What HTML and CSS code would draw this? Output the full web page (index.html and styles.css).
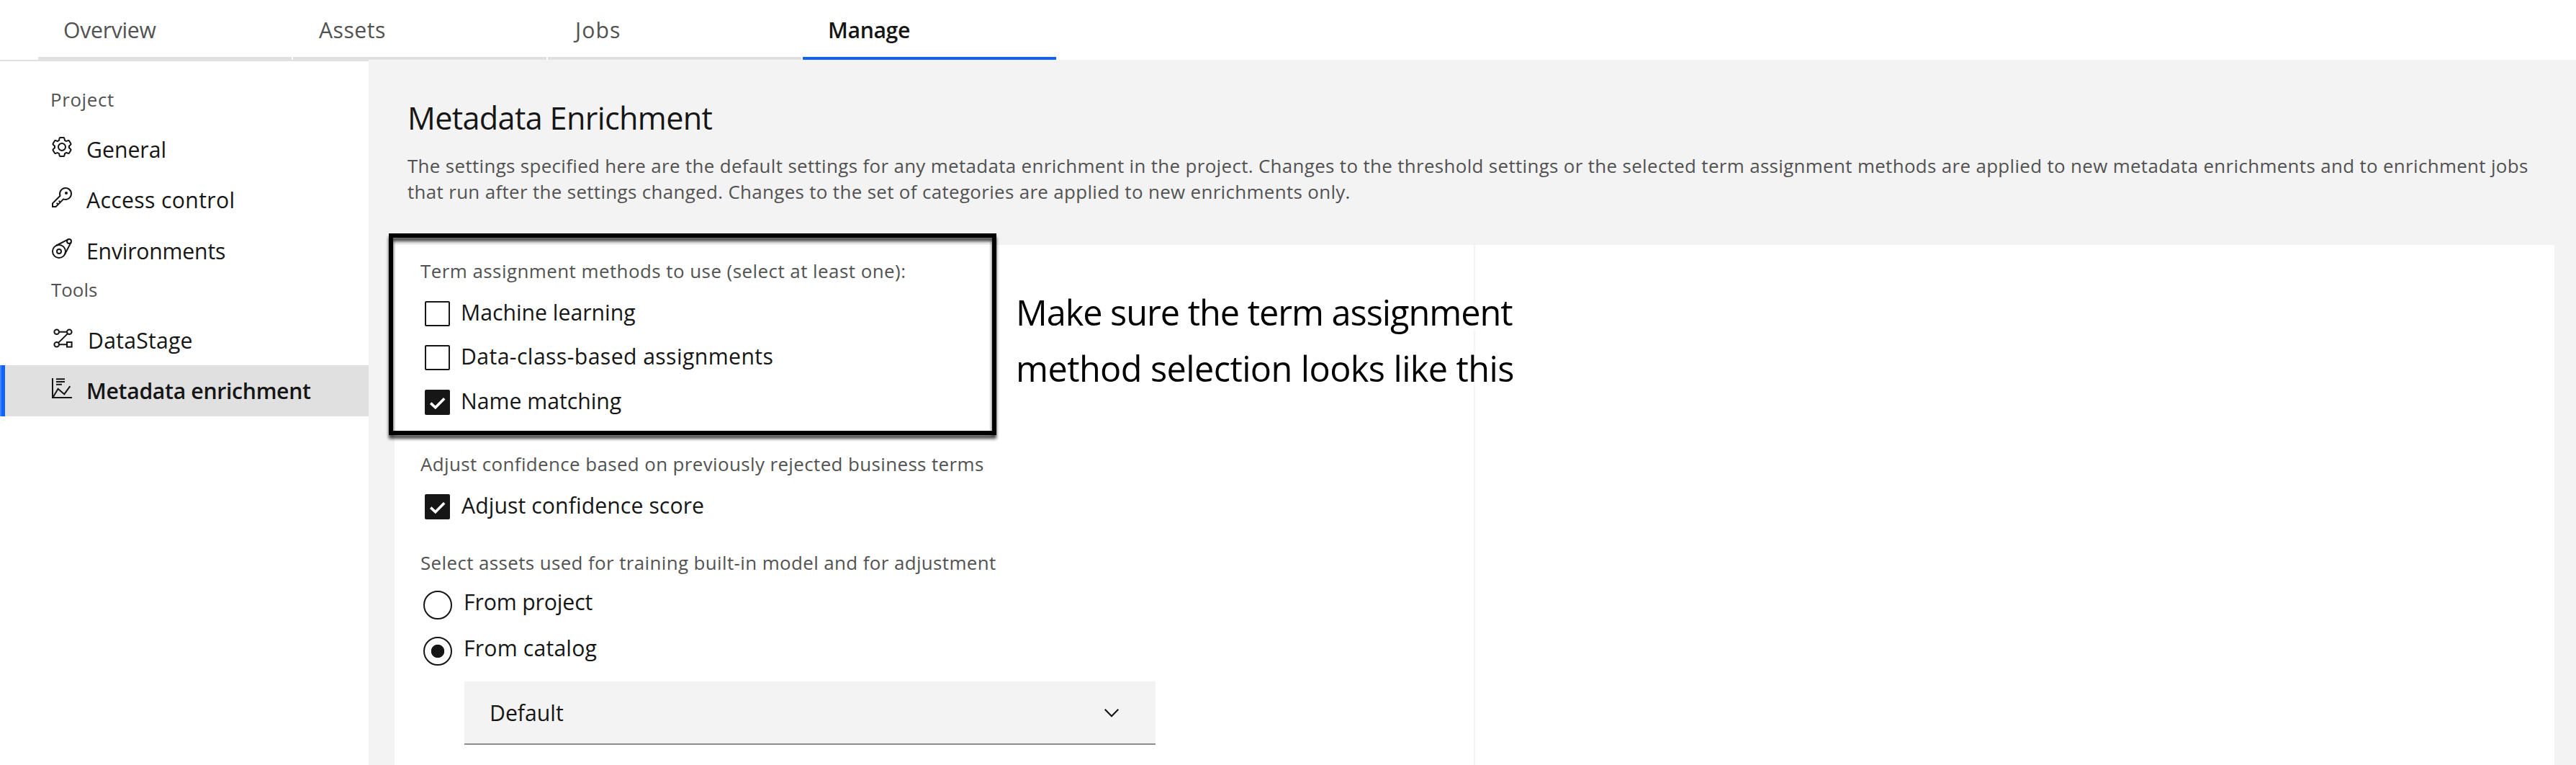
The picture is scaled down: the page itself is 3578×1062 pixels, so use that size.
FILE: index.html
```html
<!DOCTYPE html>
<html lang="en">
<head>
<meta charset="utf-8">
<title>Metadata Enrichment</title>
<link rel="stylesheet" href="styles.css">
</head>
<body>
<div class="page">
  <nav class="tabs">
    <a class="tab overview">Overview</a>
    <a class="tab assets">Assets</a>
    <a class="tab jobs">Jobs</a>
    <a class="tab manage active">Manage</a>
  </nav>
  <div class="body">
    <aside class="sidebar">
      <div class="group project">Project</div>
      <a class="item general">
        <svg class="icon" viewBox="0 0 32 32"><path d="M27,16.76c0-.25,0-.5,0-.76s0-.51,0-.77l1.92-1.68A2,2,0,0,0,29.3,11L26.94,7a2,2,0,0,0-1.73-1,2,2,0,0,0-.64.1l-2.43.82a11.35,11.35,0,0,0-1.31-.75l-.51-2.52a2,2,0,0,0-2-1.61H13.64a2,2,0,0,0-2,1.61l-.51,2.52a11.48,11.48,0,0,0-1.32.75L7.43,6.06A2,2,0,0,0,6.79,6,2,2,0,0,0,5.06,7L2.7,11a2,2,0,0,0,.41,2.51L5,15.24c0,.25,0,.5,0,.76s0,.51,0,.77L3.11,18.45A2,2,0,0,0,2.7,21L5.06,25a2,2,0,0,0,1.73,1,2,2,0,0,0,.64-.1l2.43-.82a11.35,11.35,0,0,0,1.31.75l.51,2.52a2,2,0,0,0,2,1.61h4.72a2,2,0,0,0,2-1.61l.51-2.52a11.48,11.48,0,0,0,1.32-.75l2.42.82a2,2,0,0,0,.64.1,2,2,0,0,0,1.73-1L29.3,21a2,2,0,0,0-.41-2.51ZM25.21,24l-3.43-1.16a8.86,8.86,0,0,1-2.71,1.57L18.36,28H13.64l-.71-3.55a9.36,9.36,0,0,1-2.7-1.57L6.79,24,4.43,20l2.72-2.4a8.9,8.9,0,0,1,0-3.13L4.43,12,6.79,8l3.43,1.16a8.86,8.86,0,0,1,2.71-1.57L13.64,4h4.72l.71,3.55a9.36,9.36,0,0,1,2.7,1.57L25.21,8,27.57,12l-2.72,2.4a8.9,8.9,0,0,1,0,3.13L27.57,20Z"/><path d="M16,22a6,6,0,1,1,6-6A5.94,5.94,0,0,1,16,22Zm0-10a3.91,3.91,0,0,0-4,4,3.91,3.91,0,0,0,4,4,3.91,3.91,0,0,0,4-4A3.91,3.91,0,0,0,16,12Z"/></svg>
        <span class="label">General</span>
      </a>
      <a class="item access">
        <svg class="icon" viewBox="0 0 32 32"><path d="M21,2a8.9977,8.9977,0,0,0-8.6119,11.6118L2,24v6H8L18.3881,19.6118A9,9,0,1,0,21,2Zm0,16a7.0125,7.0125,0,0,1-2.0322-.3022L17.821,17.35l-.8472.8472-3.1811,3.1812L12.4141,20,11,21.4141l1.3787,1.3786-1.5859,1.586L9.4141,23,8,24.4141l1.3787,1.3786L7.1716,28H4V24.8284l9.8023-9.8023.8472-.8474-.3473-1.1467A7,7,0,1,1,21,18Z"/><circle cx="22" cy="10" r="2"/></svg>
        <span class="label">Access control</span>
      </a>
      <a class="item environments">
        <svg class="icon line" viewBox="0 0 32 32"><circle cx="12" cy="20" r="9"/><circle cx="12" cy="20" r="3"/><circle cx="26" cy="6" r="3"/><path d="M7.8 12L24.6 3.3M20 24L28.7 7.4"/></svg>
        <span class="label">Environments</span>
      </a>
      <div class="group tools">Tools</div>
      <a class="item datastage">
        <svg class="icon line" viewBox="0 0 32 32"><circle cx="6.7" cy="7.7" r="3.3"/><circle cx="24.3" cy="7.7" r="3.3"/><circle cx="6.7" cy="25.3" r="3.3"/><rect x="21" y="22" width="6.6" height="6.6"/><path d="M10 7.7H21M10 25.3H21M9.1 22.9L22 10.1"/></svg>
        <span class="label">DataStage</span>
      </a>
      <a class="item enrichment selected">
        <svg class="icon line" viewBox="0 0 32 32"><path d="M3 2V29H30M8 3.2H20M8 7H20M8 10.8H16M3.6 28.6L10.6 16.7L19.3 24.2L27.3 13.2"/></svg>
        <span class="label">Metadata enrichment</span>
      </a>
    </aside>
    <main class="main">
      <h1 class="title">Metadata Enrichment</h1>
      <p class="description">The settings specified here are the default settings for any metadata enrichment in the project. Changes to the threshold settings or the selected term assignment methods are applied to new metadata enrichments and to enrichment jobs<br>that run after the settings changed. Changes to the set of categories are applied to new enrichments only.</p>
      <div class="card">
        <div class="settings">
          <section class="methods">
            <h2 class="legend methods-legend">Term assignment methods to use (select at least one):</h2>
            <div class="option"><span class="checkbox"></span><span class="label machine">Machine learning</span></div>
            <div class="option"><span class="checkbox"></span><span class="label dataclass">Data-class-based assignments</span></div>
            <div class="option"><span class="checkbox checked"><svg viewBox="0 0 35 35"><path d="M8.2 18.6L14.8 24.8L27.2 12.2"/></svg></span><span class="label name">Name matching</span></div>
          </section>
          <section class="adjust">
            <h2 class="legend">Adjust confidence based on previously rejected business terms</h2>
            <div class="option"><span class="checkbox checked"><svg viewBox="0 0 35 35"><path d="M8.2 18.6L14.8 24.8L27.2 12.2"/></svg></span><span class="label score">Adjust confidence score</span></div>
          </section>
          <section class="training">
            <h2 class="legend">Select assets used for training built-in model and for adjustment</h2>
            <div class="choice first"><span class="radio"></span><span class="label from-project">From project</span></div>
            <div class="choice"><span class="radio on"></span><span class="label from-catalog">From catalog</span></div>
            <div class="dropdown"><span class="label">Default</span><svg class="chevron" viewBox="0 0 22 14"><path d="M1.7 1.8L11 11.2L20.3 1.8"/></svg></div>
          </section>
        </div>
      </div>
    </main>
  </div>
  <div class="highlight"></div>
  <div class="note"><div class="note-top">Make sure the term assignment</div><div class="note-bottom">method selection looks like this</div></div>
</div>
</body>
</html>
```
FILE: styles.css
```css
* { box-sizing: border-box; }
body { margin: 0; background: #fff; color: #161616; font: 400 30.2px/41px "Open Sans", sans-serif; }
h1, h2, p { margin: 0; font-weight: 400; }
.page { position: relative; width: 3578px; height: 1062px; overflow: hidden; display: flex; flex-direction: column; white-space: nowrap; }

/* Tabs */
.tabs { display: flex; gap: 2px; height: 83px; padding-left: 53px; flex: none; }
.tab { width: 352px; padding: 21px 0 0 35px; border-bottom: 4px solid #e0e0e0; color: #525252; }
.tab.overview { letter-spacing: -0.29px; }
.tab.assets { padding-left: 36px; letter-spacing: 0.49px; }
.tab.jobs { padding-left: 38px; letter-spacing: 1.09px; }
.tab.manage { letter-spacing: -0.35px; }
.tab.active { color: #161616; font-weight: 600; border-color: #0f62fe; }

.body { display: flex; flex: 1; min-height: 0; }

/* Sidebar */
.sidebar { width: 512px; flex: none; border-top: 2px solid #e0e0e0; padding-top: 35px; }
.group { padding: 0 0 16px 71px; font-size: 25.9px; line-height: 36px; color: #525252; }
.project { padding-left: 70px; letter-spacing: 0.63px; }
.tools { margin-top: 0.8px; padding-bottom: 17px; }
.item { display: flex; gap: 18px; height: 70.4px; padding: 15px 0 0 70px; }
.icon { width: 32px; height: 32px; margin-top: 1px; flex: none; fill: #161616; }
.icon.line { fill: none; stroke: #161616; stroke-width: 2; }
.access .label { letter-spacing: 0.35px; }
.environments .label { letter-spacing: -0.2px; }
.datastage { padding-left: 72px; }
.datastage .label { letter-spacing: 0.23px; }
.selected { background: linear-gradient(90deg, #4080f8 2px, #0f62fe 2px 7px, #e0e0e0 7px); font-weight: 600; letter-spacing: -0.32px; }

/* Content */
.main { flex: 1; display: flex; flex-direction: column; background: #f3f3f3; padding: 52px 30px 0 36px; }
.title { padding-left: 18px; font-size: 43.2px; line-height: 57px; letter-spacing: -0.66px; }
.description { margin: 21.4px 0 56.2px; padding-left: 18px; font-size: 25.9px; line-height: 35.2px; letter-spacing: 0.35px; color: #525252; }
.card { flex: 1; background: #fff; }
.settings { width: 1501px; height: 100%; padding: 18px 0 0 36px; border-right: 2px solid #f3f3f3; }
.legend { margin-bottom: 18px; font-size: 25.9px; line-height: 36px; letter-spacing: 0.4px; color: #525252; }
.methods-legend { letter-spacing: 0.47px; }
.option { display: flex; gap: 15px; height: 61.5px; padding: 0.7px 0 0 6px; }
.checkbox { width: 35px; height: 35px; margin-top: 5.3px; flex: none; border: 2px solid #161616; border-radius: 2px; }
.checkbox.checked { border: 0; background: #161616; }
.checkbox svg { display: block; width: 35px; height: 35px; fill: none; stroke: #fff; stroke-width: 3.6; }
.dataclass { letter-spacing: 0.41px; }
.score { padding-left: 1px; letter-spacing: 0.09px; }
.adjust { margin-top: 30px; }
.training { margin-top: 21.5px; }
.training .legend { margin-bottom: 16px; }
.choice { display: flex; gap: 16px; height: 64px; padding-left: 4px; }
.radio { width: 40px; height: 40px; margin-top: 5px; flex: none; border: 2px solid #161616; border-radius: 50%; }
.radio.on { background: radial-gradient(circle, #161616 8.8px, transparent 9.6px); }
.from-project { letter-spacing: -0.12px; }
.from-catalog { letter-spacing: 0.19px; }
.dropdown { display: flex; align-items: center; justify-content: space-between; width: 960px; height: 88px; margin: 3px 0 0 61px; padding: 0 50px 0 35px; background: #f3f3f3; border-bottom: 2px solid #8d8d8d; }
.chevron { width: 22px; height: 14px; margin-top: 1px; fill: none; stroke: #161616; stroke-width: 2.2; }

/* Annotations over the page */
.highlight { position: absolute; left: 540px; top: 324px; width: 844px; height: 280px; border: 6px solid #000; filter: drop-shadow(0 5px 2px rgba(0, 0, 0, 0.75)); }
.note { position: absolute; left: 1411px; top: 394px; font-size: 48.6px; line-height: 78px; font-weight: 500; color: #000; text-shadow: 0 0 5px #fff, 0 0 5px #fff, 0 -6px 3px #fff, 0 6px 3px #fff, 6px 0 3px #fff; }
.note-top { letter-spacing: -1.02px; }
.note-bottom { letter-spacing: -0.57px; }
```
